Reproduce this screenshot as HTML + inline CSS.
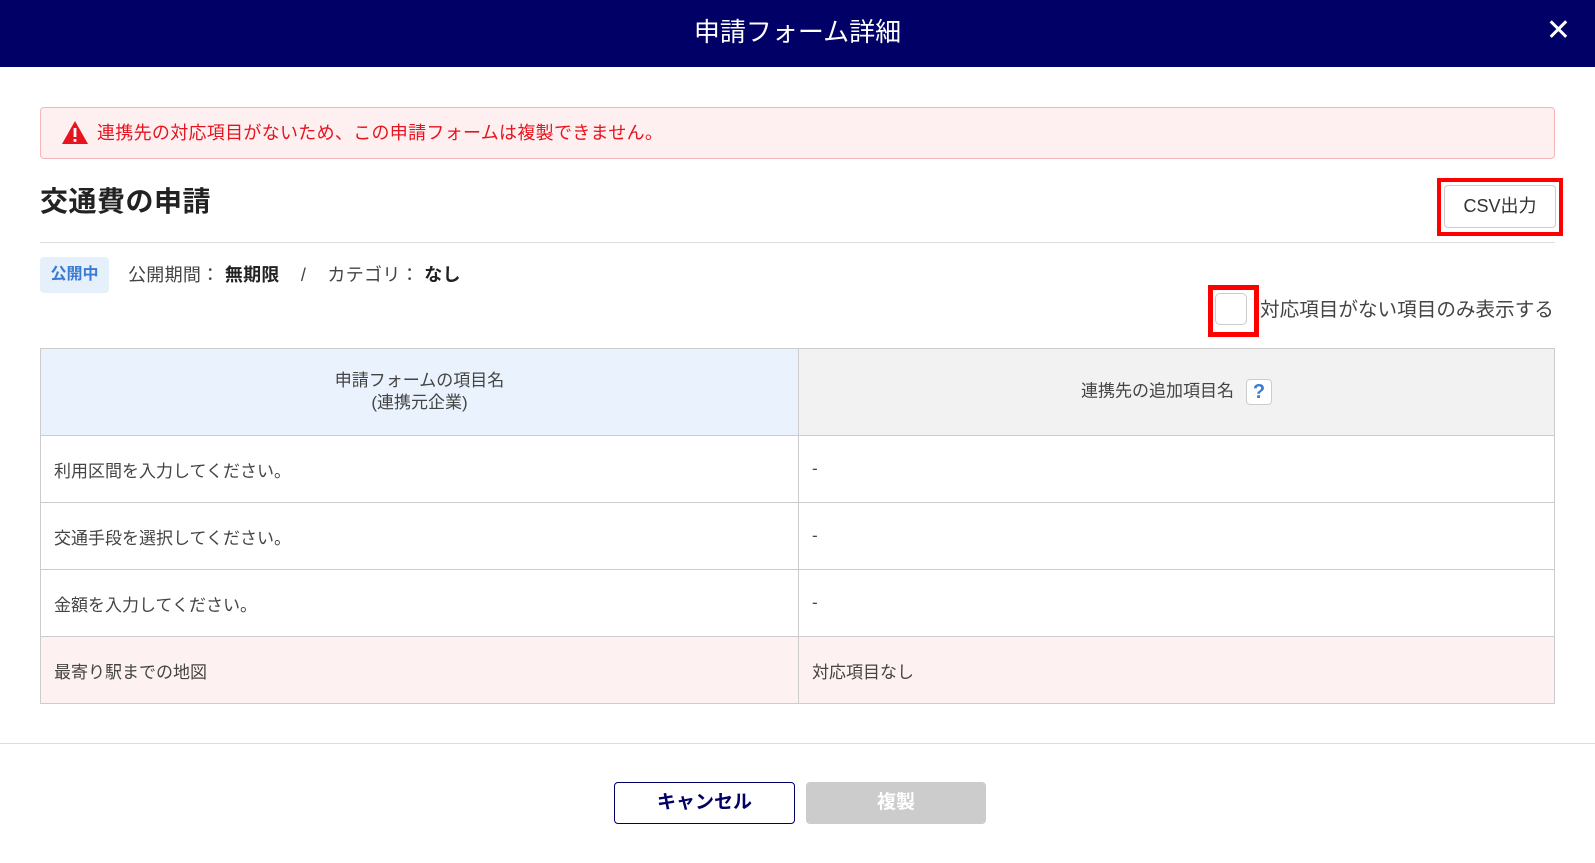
<!DOCTYPE html>
<html><head><meta charset="utf-8"><style>
*{box-sizing:border-box;margin:0;padding:0}
body{width:1595px;height:863px;background:#fff;font-family:"Liberation Sans","Noto Sans CJK JP",sans-serif;color:#333;position:relative;overflow:hidden}
.abs{position:absolute}
.hdr{left:0;top:0;width:1595px;height:67px;background:#000066;color:#fff;font-size:26px;text-align:center;line-height:64px}
.x{right:24px;top:14px;color:#fff;font-size:30px;line-height:34px;font-weight:300}
.alert{left:40px;top:107px;width:1515px;height:52px;background:#fef0f0;border:1px solid #f4b8b8;border-radius:4px;color:#e6141e;font-size:18px;line-height:50px;padding-left:56px;letter-spacing:0.3px}
.h1{left:40px;top:180px;font-size:28px;font-weight:bold;color:#222;letter-spacing:0.5px}
.csvr{left:1437px;top:178px;width:126px;height:58px;border:4px solid #f00}
.csv{left:1444px;top:185px;width:112px;height:43px;border:1px solid #ccc;border-radius:4px;font-size:18px;text-align:center;line-height:41px;color:#333;background:#fff}
.div{left:40px;top:242px;width:1515px;height:1px;background:#ddd}
.badge{left:40px;top:257px;width:69px;height:36px;background:#e6f0fb;border-radius:4px;color:#3a7bd5;font-weight:bold;font-size:16px;text-align:center;line-height:36px}
.meta{left:128px;top:262px;font-size:18px;line-height:26px;color:#444;letter-spacing:0.3px}
.meta b{color:#222}
.cbr{left:1208px;top:285px;width:51px;height:52px;border:5px solid #f00}
.cb{left:1215px;top:293px;width:32px;height:32px;border:1px solid #ccc;border-radius:5px;background:#fff}
.cbl{left:1260px;top:296px;font-size:19.6px;color:#444;line-height:28px}
table{position:absolute;left:40px;top:348px;width:1515px;border-collapse:collapse;font-size:17px;color:#444}
td,th{border:1px solid #ccc;font-weight:normal}
th{height:87px;text-align:center;line-height:22px}
td{height:67px;padding-left:13px}
.q{display:inline-block;width:26px;height:26px;border:1px solid #ccc;border-radius:4px;color:#3a7bd5;font-weight:bold;font-size:20px;line-height:24px;text-align:center;vertical-align:middle;margin-left:12px;background:#fff}
.fdiv{left:0;top:743px;width:1595px;height:1px;background:#ddd}
.btn1{left:614px;top:782px;width:181px;height:42px;border:1px solid #000066;border-radius:4px;color:#000066;font-weight:bold;font-size:19px;text-align:center;line-height:40px}
.btn2{left:806px;top:782px;width:180px;height:42px;background:#ccc;border-radius:4px;color:#fff;font-weight:bold;font-size:19px;text-align:center;line-height:42px}
</style></head><body>
<div class="abs hdr">申請フォーム詳細</div>
<div class="abs x">✕</div>
<div class="abs alert">連携先の対応項目がないため、この申請フォームは複製できません。</div>
<svg class="abs" style="left:61px;top:120px" width="28" height="25" viewBox="0 0 28 25"><path d="M14 1 L27 24 L1 24 Z" fill="#e6141e"/><rect x="12.6" y="8" width="2.8" height="9" fill="#fff"/><rect x="12.6" y="19" width="2.8" height="2.8" fill="#fff"/></svg>
<div class="abs h1">交通費の申請</div>
<div class="abs csvr"></div>
<div class="abs csv">CSV出力</div>
<div class="abs div"></div>
<div class="abs badge">公開中</div>
<div class="abs meta">公開期間： <b>無期限</b>&nbsp;&nbsp;&nbsp;&nbsp;/&nbsp;&nbsp;&nbsp;&nbsp;カテゴリ： <b>なし</b></div>
<div class="abs cbr"></div>
<div class="abs cb"></div>
<div class="abs cbl">対応項目がない項目のみ表示する</div>
<table>
<tr><th style="width:758px;background:#eaf3fd">申請フォームの項目名<br>(連携元企業)</th><th style="background:#f2f2f2">連携先の追加項目名<span class="q">?</span></th></tr>
<tr><td>利用区間を入力してください。</td><td>-</td></tr>
<tr><td>交通手段を選択してください。</td><td>-</td></tr>
<tr><td>金額を入力してください。</td><td>-</td></tr>
<tr style="background:#fef1f1"><td>最寄り駅までの地図</td><td>対応項目なし</td></tr>
</table>
<div class="abs fdiv"></div>
<div class="abs btn1">キャンセル</div>
<div class="abs btn2">複製</div>
</body></html>
